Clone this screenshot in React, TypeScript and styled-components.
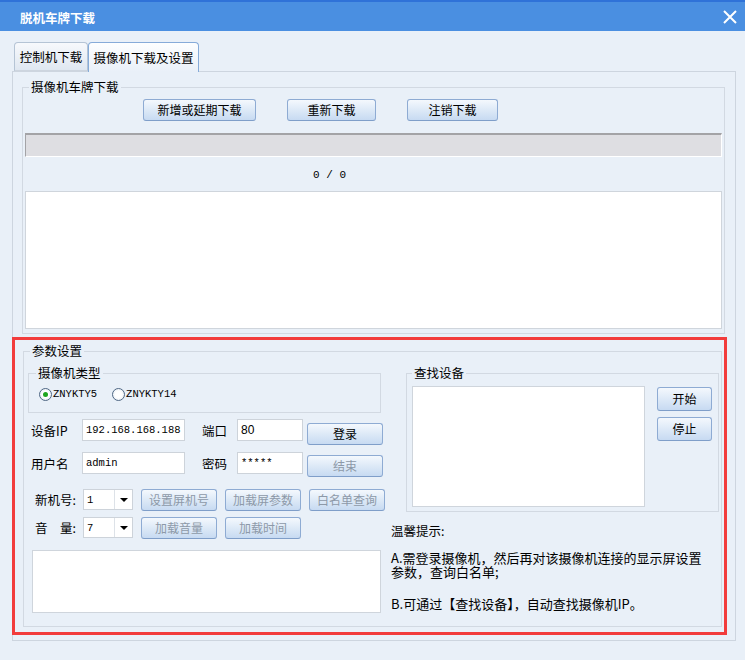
import React from 'react';
import styled, { createGlobalStyle } from 'styled-components';

const Global = createGlobalStyle`
  html, body { margin: 0; padding: 0; background: #e9f0f8; }
  body {
    font-family: "Noto Sans CJK SC", "Noto Sans", sans-serif;
    font-size: 12px;
    color: #000;
  }
  * { box-sizing: border-box; }
`;

const Window = styled.div`
  position: relative;
  width: 745px;
  height: 660px;
  background: #e9f0f8;
  overflow: hidden;
  display: flex;
  flex-direction: column;
`;

const TitleBar = styled.div`
  height: 31px;
  flex: none;
  background: #4a8fe1;
  border-top: 2px solid #2f72d8;
  display: flex;
  align-items: center;
  justify-content: space-between;
  padding: 1px 8px 0 20px;
  color: #fff;
  font-weight: bold;
  font-size: 12.5px;
`;

const CloseIcon = styled.svg`
  width: 14px;
  height: 14px;
  display: block;
`;

const Body = styled.div`
  padding: 11px 9px 0 12px;
  display: flex;
  flex-direction: column;
`;

const TabStrip = styled.div`
  display: flex;
  height: 29px;
  margin-left: 2px;
  align-items: flex-end;
`;

const Tab = styled.div<{ $active?: boolean; $w: number }>`
  position: relative;
  z-index: ${(p) => (p.$active ? 1 : 0)};
  width: ${(p) => p.$w}px;
  height: ${(p) => (p.$active ? 30 : 29)}px;
  margin-bottom: ${(p) => (p.$active ? -1 : 0)}px;
  border: 1px solid ${(p) => (p.$active ? '#86abd9' : '#b5c4d5')};
  border-bottom: ${(p) => (p.$active ? 'none' : '1px solid #cdd5df')};
  border-radius: 4px 4px 0 0;
  background: ${(p) =>
    p.$active
      ? 'linear-gradient(#fdfeff, #e9f0f8)'
      : 'linear-gradient(#f7f9fc, #dfe7f1)'};
  display: flex;
  align-items: center;
  justify-content: center;
  font-size: 12.5px;
  padding-bottom: ${(p) => (p.$active ? 1 : 0)}px;
`;

const TabPanel = styled.div`
  width: 724px;
  height: 570px;
  border: 1px solid #cdd5df;
  padding: 8px 10px 0 9px;
  display: flex;
  flex-direction: column;
`;

const Group = styled.fieldset<{ $ml?: number; $mr?: number; $mt?: number; $h?: number }>`
  margin: ${(p) => p.$mt ?? 0}px ${(p) => p.$mr ?? 0}px 0 ${(p) => p.$ml ?? 0}px;
  border: 1px solid #d2d9e2;
  min-width: 0;
  ${(p) => (p.$h ? `height: ${p.$h}px;` : '')}
`;

const Legend = styled.legend<{ $indent: number }>`
  padding: 0 2px;
  margin-left: ${(p) => p.$indent}px;
  line-height: 14px;
  font-size: 12.5px;
`;

const DownloadGroup = styled(Group)`
  padding: 5px 2px 4px 2px;
  display: flex;
  flex-direction: column;
`;

const ButtonRow = styled.div`
  display: flex;
  gap: 31px;
  padding-left: 118px;
`;

const Btn = styled.button<{ $w: number; $h?: number; $off?: boolean; $mt?: number }>`
  width: ${(p) => p.$w}px;
  height: ${(p) => p.$h ?? 22}px;
  margin-top: ${(p) => p.$mt ?? 0}px;
  flex: none;
  padding: 0;
  border: 1px solid #8eabd3;
  border-bottom-color: #7f9ec9;
  border-radius: 3px;
  background: linear-gradient(#f4f8fd, #dde9f7 50%, #c7daf2);
  font-family: inherit;
  font-size: 12px;
  color: ${(p) => (p.$off ? '#8d99a8' : '#000')};
  line-height: 1;
`;

const Progress = styled.div`
  margin-top: 12px;
  height: 24px;
  background: #dedee2;
  border-top: 2px solid #a3a3a6;
  border-left: 1px solid #a3a3a6;
  border-right: 1px solid #fff;
  border-bottom: 1px solid #fff;
`;

const Counter = styled.div`
  height: 34px;
  display: flex;
  align-items: center;
  padding-left: 288px;
  font-family: "Liberation Mono", monospace;
  font-size: 11px;
  white-space: pre;
  padding-top: 2px;
`;

const WhiteBox = styled.div<{ $w?: number; $h: number; $ml?: number; $mt?: number }>`
  ${(p) => (p.$w ? `width: ${p.$w}px;` : '')}
  height: ${(p) => p.$h}px;
  margin-left: ${(p) => p.$ml ?? 0}px;
  margin-top: ${(p) => p.$mt ?? 0}px;
  flex: none;
  background: #fff;
  border: 1px solid #cfd5dc;
`;

const ParamGroup = styled(Group)`
  padding: 8px 2px 0 4px;
  display: grid;
  grid-template-columns: 356px 328px;
  column-gap: 7px;
  align-items: start;
`;

const Column = styled.div`
  display: flex;
  flex-direction: column;
`;

const TypeGroup = styled(Group)`
  width: 353px;
  padding: 7px 0 11px 10px;
  display: flex;
  gap: 15px;
`;

const RadioItem = styled.label`
  display: flex;
  align-items: center;
  gap: 1px;
  height: 14px;
  font-family: "Liberation Mono", monospace;
  font-size: 10.5px;
`;

const RadioDot = styled.span<{ $on?: boolean }>`
  width: 13px;
  height: 13px;
  border-radius: 50%;
  border: 1px solid #4f6784;
  background: radial-gradient(circle, #ffffff 40%, #dfe7f0);
  display: flex;
  align-items: center;
  justify-content: center;
  &::after {
    content: '';
    width: 5px;
    height: 5px;
    border-radius: 50%;
    background: ${(p) => (p.$on ? '#1ea51e' : 'transparent')};
  }
`;

const FormRow = styled.div<{ $mt: number; $pl: number }>`
  display: flex;
  align-items: flex-start;
  margin-top: ${(p) => p.$mt}px;
  padding-left: ${(p) => p.$pl}px;
`;

const Label = styled.span<{ $w: number; $h?: number }>`
  width: ${(p) => p.$w}px;
  height: ${(p) => p.$h ?? 22}px;
  flex: none;
  display: flex;
  align-items: center;
  font-size: 12.5px;
  white-space: pre;
`;

const Field = styled.input<{ $w: number; $mono?: boolean; $mr?: number }>`
  width: ${(p) => p.$w}px;
  height: 22px;
  margin-right: ${(p) => p.$mr ?? 0}px;
  flex: none;
  border: 1px solid #cdd3da;
  background: #fff;
  padding: 0 0 0 3px;
  outline: none;
  font-family: ${(p) => (p.$mono ? '"Liberation Mono", monospace' : '"Liberation Sans", sans-serif')};
  font-size: ${(p) => (p.$mono ? '10.5px' : '12px')};
  color: #000;
`;

const Combo = styled.div`
  width: 50px;
  height: 21px;
  flex: none;
  border: 1px solid #cdd3da;
  background: #fff;
  display: flex;
  margin-right: 8px;
`;

const ComboValue = styled.span`
  flex: 1;
  display: flex;
  align-items: center;
  padding-left: 3px;
  font-family: "Liberation Mono", monospace;
  font-size: 10.5px;
`;

const ComboArrow = styled.span`
  width: 18px;
  border-left: 1px solid #dde2e8;
  display: flex;
  align-items: center;
  justify-content: center;
  &::after {
    content: '';
    border-left: 4px solid transparent;
    border-right: 4px solid transparent;
    border-top: 4px solid #000;
    margin-top: 1px;
  }
`;

const BtnGroup = styled.div<{ $gap: number }>`
  display: flex;
  gap: ${(p) => p.$gap}px;
`;

const FindGroup = styled(Group)`
  width: 313px;
  padding: 6px 0 4px 5px;
  display: flex;
  gap: 12px;
`;

const SideButtons = styled.div`
  display: flex;
  flex-direction: column;
  gap: 6px;
  padding-top: 1px;
`;

const TipTitle = styled.div`
  margin-top: 12px;
  line-height: 14px;
  font-size: 12.5px;
`;

const TipText = styled.p<{ $mt: number }>`
  margin: ${(p) => p.$mt}px 0 0 0;
  width: 316px;
  font-size: 13px;
  line-height: 14px;
`;

const RedFrame = styled.div`
  position: absolute;
  left: 12px;
  top: 337px;
  width: 715px;
  height: 298px;
  border: 3px solid #f23c3c;
  pointer-events: none;
`;

export default function App() {
  return (
    <Window>
      <Global />
      <TitleBar>
        <span>脱机车牌下载</span>
        <CloseIcon viewBox="0 0 14 14">
          <path d="M1 1 L13 13 M13 1 L1 13" stroke="#fff" strokeWidth="2" />
        </CloseIcon>
      </TitleBar>
      <Body>
        <TabStrip>
          <Tab $w={74}>控制机下载</Tab>
          <Tab $w={111} $active>摄像机下载及设置</Tab>
        </TabStrip>
        <TabPanel>
          <DownloadGroup>
            <Legend $indent={4}>摄像机车牌下载</Legend>
            <ButtonRow>
              <Btn $w={113}>新增或延期下载</Btn>
              <Btn $w={89}>重新下载</Btn>
              <Btn $w={91}>注销下载</Btn>
            </ButtonRow>
            <Progress />
            <Counter>0 / 0</Counter>
            <WhiteBox $h={138} />
          </DownloadGroup>

          <ParamGroup $mt={10} $ml={1} $mr={3} $h={283}>
            <Legend $indent={2}>参数设置</Legend>
            <Column>
              <TypeGroup>
                <Legend $indent={-3}>摄像机类型</Legend>
                <RadioItem>
                  <RadioDot $on />
                  ZNYKTY5
                </RadioItem>
                <RadioItem>
                  <RadioDot />
                  ZNYKTY14
                </RadioItem>
              </TypeGroup>
              <FormRow $mt={6} $pl={3}>
                <Label $w={51}>设备IP</Label>
                <Field $w={103} $mono $mr={17} defaultValue="192.168.168.188" />
                <Label $w={35}>端口</Label>
                <Field $w={66} $mr={4} defaultValue="80" />
                <Btn $w={76} $mt={4}>登录</Btn>
              </FormRow>
              <FormRow $mt={7} $pl={3}>
                <Label $w={51}>用户名</Label>
                <Field $w={103} $mono $mr={17} defaultValue="admin" />
                <Label $w={35}>密码</Label>
                <Field $w={66} $mono $mr={4} defaultValue="*****" />
                <Btn $w={76} $mt={3} $off>结束</Btn>
              </FormRow>
              <FormRow $mt={12} $pl={7}>
                <Label $w={48} $h={21}>新机号:</Label>
                <Combo>
                  <ComboValue>1</ComboValue>
                  <ComboArrow />
                </Combo>
                <BtnGroup $gap={8}>
                  <Btn $w={76} $off>设置屏机号</Btn>
                  <Btn $w={76} $off>加载屏参数</Btn>
                  <Btn $w={76} $off>白名单查询</Btn>
                </BtnGroup>
              </FormRow>
              <FormRow $mt={6} $pl={7}>
                <Label $w={48} $h={21}>{'音　量:'}</Label>
                <Combo>
                  <ComboValue>7</ComboValue>
                  <ComboArrow />
                </Combo>
                <BtnGroup $gap={8}>
                  <Btn $w={76} $off>加载音量</Btn>
                  <Btn $w={76} $off>加载时间</Btn>
                </BtnGroup>
              </FormRow>
              <WhiteBox $w={349} $h={63} $ml={4} $mt={11} />
            </Column>
            <Column>
              <FindGroup $ml={15}>
                <Legend $indent={0}>查找设备</Legend>
                <WhiteBox $w={233} $h={121} />
                <SideButtons>
                  <Btn $w={55} $h={24}>开始</Btn>
                  <Btn $w={55} $h={24}>停止</Btn>
                </SideButtons>
              </FindGroup>
              <TipTitle>温馨提示:</TipTitle>
              <TipText $mt={13}>A.需登录摄像机，然后再对该摄像机连接的显示屏设置参数，查询白名单;</TipText>
              <TipText $mt={18}>B.可通过【查找设备】，自动查找摄像机IP。</TipText>
            </Column>
          </ParamGroup>
        </TabPanel>
      </Body>
      <RedFrame />
    </Window>
  );
}
